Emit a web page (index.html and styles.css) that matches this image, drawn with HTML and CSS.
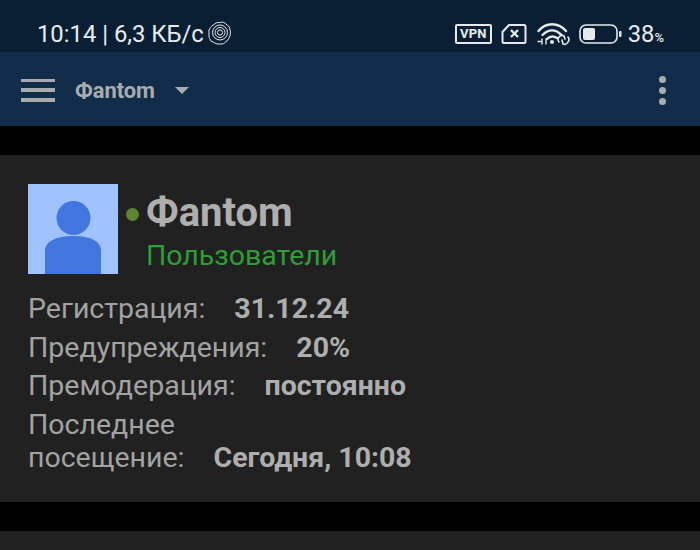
FILE: index.html
```html
<!DOCTYPE html>
<html lang="ru">
<head>
<meta charset="utf-8">
<title>Фаntom</title>
<link rel="stylesheet" href="styles.css">
</head>
<body>
<div class="page">
  <header class="status">
    <div class="status-left">
      <span>10:14 | 6,3 КБ/с</span>
      <svg class="rose" width="24" height="24" viewBox="0 0 24 24" fill="none" stroke="#e6eaee" stroke-width="1">
        <path d="M8 2c2-1 4 0 6-1 2 0 4 2 5 3 2 1 3 3 3 5 1 2 0 4 0 6-1 2-2 4-3 5-2 1-3 3-5 3-2 0-3 0-5 0-2-1-4-2-6-3-1-2-2-3-2-5 0-2 0-4 0-6 1-2 2-3 3-4 1-1 3-2 4-3z"/>
        <circle cx="12" cy="11.500" r="7.500"/>
        <circle cx="12" cy="11.500" r="5"/>
        <circle cx="12" cy="11.500" r="2.600"/>
      </svg>
    </div>
    <div class="status-right">
      <span class="vpn">VPN</span>
      <svg class="sim" width="26" height="22" viewBox="0 0 26 22" fill="none">
        <path d="M8 2h15a1.500 1.500 0 0 1 1.500 1.500v15a1.500 1.500 0 0 1-1.500 1.500H3a1.500 1.500 0 0 1-1.500-1.500V9z" stroke="#e6eaee" stroke-width="2"/>
        <path d="M10 7l7 7M17 7l-7 7" stroke="#e6eaee" stroke-width="2.400"/>
      </svg>
      <svg width="33" height="24" viewBox="0 0 33 24" fill="none" stroke="#e6eaee" stroke-linecap="round">
        <path d="M1.500 9C9 0 21 0 29 9" stroke-width="2.400"/>
        <path d="M5.500 13c6-6 13-6 19 0" stroke-width="2.400"/>
        <path d="M10 17c3-3 7-3 10-1" stroke-width="2.400"/>
        <circle cx="15" cy="20" r="2" fill="#e6eaee" stroke="none"/>
        <path d="M1 19.500h2.500M5 17v5M9 17v5" stroke-width="1.400"/>
        <path d="M22 20a4 4 0 0 1 0-5 4 4 0 0 1 5-1l1 3" stroke-width="1.600"/>
        <path d="M31 15a4 4 0 0 1 0 5 4 4 0 0 1-5 2l-1-4" stroke-width="1.600"/>
      </svg>
      <svg class="battery" width="43" height="22" viewBox="0 0 43 22" fill="none">
        <rect x="1" y="2" width="37" height="18" rx="6" stroke="#e6eaee" stroke-width="1.600"/>
        <rect x="4" y="5" width="12" height="12" rx="2" fill="#e6eaee"/>
        <rect x="40" y="8" width="2.500" height="6" rx="1" fill="#e6eaee"/>
      </svg>
      <span class="pct">38<small>%</small></span>
    </div>
  </header>
  <nav class="toolbar">
    <div class="toolbar-left">
      <div class="burger"><i></i><i></i><i></i></div>
      <span class="title">Фаntom</span>
      <span class="caret"></span>
    </div>
    <div class="dots"><i></i><i></i><i></i></div>
  </nav>
  <section class="card">
    <div class="head">
      <svg class="avatar" width="90" height="90" viewBox="0 0 90 90">
        <rect width="90" height="90" fill="#a0c2ff"/>
        <circle cx="45.500" cy="34" r="17" fill="#4076de"/>
        <path d="M17 90V67c0-10 12-15 28.500-15S73 57 73 67v23z" fill="#4076de"/>
      </svg>
      <span class="online"></span>
      <div class="who">
        <div class="name">Фаntom</div>
        <div class="group">Пользователи</div>
      </div>
    </div>
    <div class="rows">
      <div class="row"><span>Регистрация:</span><b>31.12.24</b></div>
      <div class="row"><span>Предупреждения:</span><b>20%</b></div>
      <div class="row"><span>Премодерация:</span><b>постоянно</b></div>
      <div class="row"><span>Последнее<br>посещение:</span><b>Сегодня, 10:08</b></div>
    </div>
  </section>
  <section class="card next"></section>
</div>
</body>
</html>
```
FILE: styles.css
```css
* { box-sizing: border-box; }
html, body { margin: 0; padding: 0; }
body { background: #000; font-family: Roboto, "Liberation Sans", sans-serif; }
.page { width: 700px; height: 550px; overflow: hidden; display: flex; flex-direction: column; }

.status { height: 52px; flex: none; background: #0a1f33; color: #e8ecef; display: flex; justify-content: space-between; align-items: center; padding: 15px 36px 0 37px; font-size: 23.800px; }
.status-left { display: flex; align-items: center; gap: 4px; }
.status-right { display: flex; align-items: center; gap: 9px; }
.rose { margin-top: -2px; }
.sim { margin-left: 0; margin-right: 1px; }
.vpn { border: 2px solid #e6eaee; border-radius: 2px; font-size: 13px; font-weight: 700; line-height: 16px; padding: 0 3px; letter-spacing: .2px; }
.pct { font-size: 23.800px; margin-left: -3px; }
.pct small { font-size: 13px; font-weight: 500; }

.toolbar { height: 74px; flex: none; background: #112d4a; display: flex; justify-content: space-between; align-items: center; padding: 2px 34px 0 21px; color: #a9acaf; }
.toolbar-left { display: flex; align-items: center; }
.burger { width: 34px; height: 23px; display: flex; flex-direction: column; justify-content: space-between; margin-right: 20px; }
.burger i { height: 3.500px; background: #a9acaf; display: block; }
.title { font-size: 21.800px; font-weight: 700; }
.caret { width: 0; height: 0; border-left: 7px solid transparent; border-right: 7px solid transparent; border-top: 7px solid #a9acaf; margin-left: 20px; }
.dots { display: flex; flex-direction: column; gap: 4px; }
.dots i { width: 7px; height: 7px; border-radius: 50%; background: #a9acaf; display: block; }

.card { flex: none; background: #212121; margin-top: 29px; height: 347px; padding: 29px 28px 0; }
.card.next { height: 40px; }
.head { display: flex; align-items: flex-start; height: 90px; }
.avatar { flex: none; display: block; }
.online { width: 13px; height: 13px; border-radius: 50%; background: #5a8632; margin: 24px 0 0 8px; flex: none; }
.who { margin-left: 7px; }
.name { font-size: 40px; font-weight: 700; color: #aeaeae; line-height: 42px; margin-top: 8px; }
.group { font-size: 28.500px; color: #2d9f34; line-height: 30px; margin-top: 7px; }

.rows { margin-top: 18px; font-size: 28.500px; line-height: 33px; color: #a3a3a3; }
.row { display: flex; align-items: flex-end; margin-bottom: 5.500px; }
.row b { color: #aeaeae; font-weight: 700; margin-left: 29px; }
```
